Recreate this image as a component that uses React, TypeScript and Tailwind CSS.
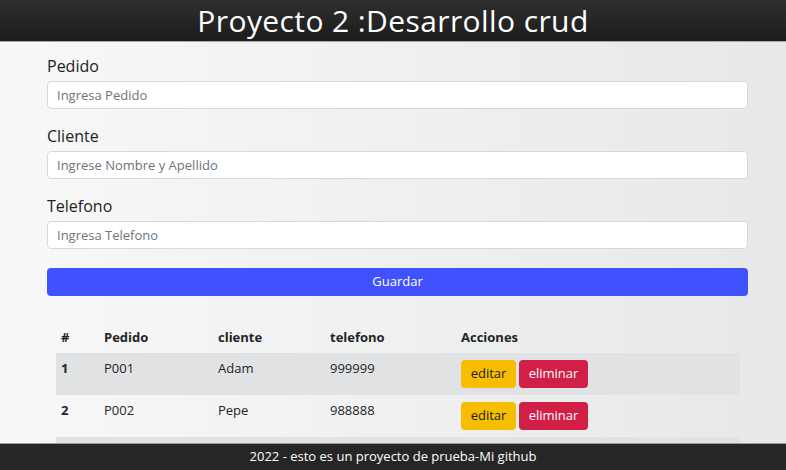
import React from "react";

const pedidos = [
  { id: 1, pedido: "P001", cliente: "Adam", telefono: "999999" },
  { id: 2, pedido: "P002", cliente: "Pepe", telefono: "988888" },
  { id: 3, pedido: "P003", cliente: "Lucia", telefono: "977777" },
];

const Campo = ({ label, placeholder }: { label: string; placeholder: string }) => {
  return (
    <div className="mb-[17px]">
      <label className="block h-[20px] leading-[20px] text-[16px] font-medium text-[#222] mb-[5px]">
        {label}
      </label>
      <input
        type="text"
        placeholder={placeholder}
        className="block w-full h-[28px] px-[9px] bg-white border border-[#d5d8dd] rounded-[4px] text-[13px] text-[#333] placeholder:text-[#6c757d] outline-none"
      />
    </div>
  );
};

export default function App() {
  return (
    <div
      className="h-screen flex flex-col overflow-hidden bg-gradient-to-r from-[#f8f8f8] to-[#e7e8e9] text-[#212529]"
      style={{ fontFamily: '"Open Sans", "DejaVu Sans", sans-serif' }}
    >
      {/* cabecera */}
      <header className="h-[42px] shrink-0 bg-gradient-to-b from-[#2f2f2f] to-[#1c1c1c] border-b border-[#a8a8a8] flex items-center justify-center">
        <h1 className="text-white text-[30px] font-medium leading-none tracking-[0.4px]">
          Proyecto 2 :Desarrollo crud
        </h1>
      </header>

      <main className="flex-1 overflow-hidden">
        <div className="ml-[47px] w-[701px] pt-[14px]">
          <Campo label="Pedido" placeholder="Ingresa Pedido" />
          <Campo label="Cliente" placeholder="Ingrese Nombre y Apellido" />
          <Campo label="Telefono" placeholder="Ingresa Telefono" />

          <button className="w-full h-[28px] mt-[2px] rounded-[4px] bg-[#4052fe] text-white text-[13px]">
            Guardar
          </button>

          <table className="ml-[9px] w-[684px] mt-[21px] text-[13px] border-collapse">
            <thead>
              <tr className="text-left">
                <th className="w-[43px] px-[5px] pt-[11px] pb-[5px] h-[36px] font-bold">#</th>
                <th className="w-[114px] px-[5px] pt-[11px] pb-[5px] font-bold">Pedido</th>
                <th className="w-[112px] px-[5px] pt-[11px] pb-[5px] font-bold">cliente</th>
                <th className="w-[131px] px-[5px] pt-[11px] pb-[5px] font-bold">telefono</th>
                <th className="px-[5px] pt-[11px] pb-[5px] font-bold">Acciones</th>
              </tr>
            </thead>
            <tbody>
              {pedidos.map((p, i) => (
                <tr key={p.id} className={i % 2 === 0 ? "bg-[#e1e2e3]" : ""}>
                  <td className="px-[5px] pt-[6px] align-top font-bold">{p.id}</td>
                  <td className="px-[5px] pt-[6px] align-top">{p.pedido}</td>
                  <td className="px-[5px] pt-[6px] align-top">{p.cliente}</td>
                  <td className="px-[5px] pt-[6px] align-top">{p.telefono}</td>
                  <td className="px-[5px] py-[7px] align-top">
                    <div className="flex gap-[3px]">
                      <button className="h-[28px] w-[55px] rounded-[4px] bg-[#f7be00] text-[#1b1b1b] text-[13px]">
                        editar
                      </button>
                      <button className="h-[28px] w-[69px] rounded-[4px] bg-[#d11f47] text-white text-[13px]">
                        eliminar
                      </button>
                    </div>
                  </td>
                </tr>
              ))}
            </tbody>
          </table>
        </div>
      </main>

      {/* pie */}
      <footer className="h-[27px] shrink-0 bg-[#262626] border-t border-[#9c9c9c] flex items-center justify-center">
        <p className="text-white text-[13px] font-medium">
          2022 - esto es un proyecto de prueba-Mi github
        </p>
      </footer>
    </div>
  );
}
